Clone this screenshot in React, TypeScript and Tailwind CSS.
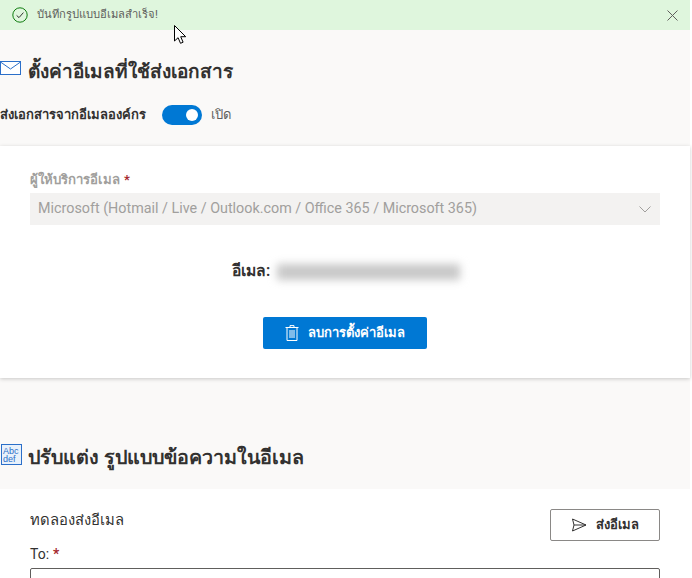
import React from "react";

const font = { fontFamily: '"Roboto","Noto Sans","DejaVu Sans",sans-serif' };

function Req() {
  return <span className="text-[#a4262c] ml-1 font-semibold">*</span>;
}

export default function App() {
  return (
    <div className="w-[692px] h-[578px] bg-white overflow-hidden relative text-[#323130]" style={font}>
      <div className="w-[690px] h-[578px] bg-[#faf9f8] flex flex-col">
        <div className="h-[30px] shrink-0 bg-[#dff6dd] flex items-center pl-3 pr-[12px] gap-[9px]">
          <svg width="16" height="16" viewBox="0 0 16 16" fill="none" className="shrink-0">
            <circle cx="8" cy="8" r="7.2" stroke="#107c10" strokeWidth="1" />
            <path d="M4.6 8.4 7 10.6 11.4 5.6" stroke="#323130" strokeWidth="1" />
          </svg>
          <span className="text-[11.2px] leading-none text-[#605e5c] flex-1">บันทึกรูปแบบอีเมลสำเร็จ!</span>
          <svg width="11" height="11" viewBox="0 0 11 11" fill="none" className="shrink-0">
            <path d="M.5.5 10.5 10.5M10.5.5.5 10.5" stroke="#605e5c" strokeWidth="1" />
          </svg>
        </div>

        <div className="h-[116px] shrink-0 flex flex-col">
          <div className="flex items-center mt-[25px] h-[34px]">
            <svg width="21" height="14" viewBox="0 0 21 14" fill="none" className="shrink-0 -mt-[8px]">
              <rect x=".5" y=".5" width="20" height="13" stroke="#2b6fc9" fill="#fff" />
              <path d="M.5 1 10.5 8 20.5 1" stroke="#2b6fc9" />
            </svg>
            <h1 className="ml-[7px] text-[19px] leading-[34px] font-bold text-[#323130] whitespace-nowrap">ตั้งค่าอีเมลที่ใช้ส่งเอกสาร</h1>
          </div>
          <div className="flex items-center mt-[16px] h-[20px]">
            <span className="text-[13px] font-semibold whitespace-nowrap">ส่งเอกสารจากอีเมลองค์กร</span>
            <span className="ml-[16px] w-10 h-5 rounded-full bg-[#0078d4] flex items-center justify-end pr-[4px]">
              <span className="w-3 h-3 rounded-full bg-white" />
            </span>
            <span className="ml-[9px] text-[13px] text-[#605e5c]">เปิด</span>
          </div>
        </div>

        <section className="h-[232px] shrink-0 bg-white shadow-[0_1px_4px_rgba(0,0,0,0.2)] px-[30px] pt-[23px] flex flex-col">
          <label className="h-[24px] text-[13.2px] leading-[22px] font-semibold text-[#a19f9d] whitespace-nowrap">
            ผู้ให้บริการอีเมล<Req />
          </label>
          <div className="h-8 bg-[#f3f2f1] flex items-center pl-2 pr-[9px] justify-between">
            <span className="text-[14.33px] text-[#a19f9d] whitespace-nowrap">Microsoft (Hotmail / Live / Outlook.com / Office 365 / Microsoft 365)</span>
            <svg width="12" height="7" viewBox="0 0 12 7" fill="none">
              <path d="M.5.5 6 6 11.5.5" stroke="#a19f9d" />
            </svg>
          </div>
          <div className="flex items-center mt-[34px] h-[26px] pl-[202px]">
            <span className="text-[15.6px] font-semibold whitespace-nowrap">อีเมล:</span>
            <span className="ml-[7px] w-[183px] h-[16px] bg-[#c8c8c8] blur-[4px]" />
          </div>
          <div className="flex justify-center mt-[32px]">
            <button className="w-[164px] h-8 bg-[#0078d4] rounded-[2px] text-white flex items-center justify-center gap-[9px]">
              <svg width="14" height="16" viewBox="0 0 14 16" fill="none">
                <path d="M.5 2.5h13M5 2.5V.6h4v1.9M2 2.5v13h10v-13M5 5v8M7 5v8M9 5v8" stroke="#fff" />
              </svg>
              <span className="text-[13px] font-semibold">ลบการตั้งค่าอีเมล</span>
            </button>
          </div>
        </section>

        <div className="h-[111px] shrink-0 flex items-end pb-[14px]">
          <div className="flex items-center h-[34px]">
            <svg width="21" height="21" viewBox="0 0 21 21" fill="none" className="shrink-0 -mt-[8px] ml-[1px]">
              <rect x=".5" y=".5" width="20" height="20" fill="#e8f1fb" stroke="#2b6fc9" />
              <text x="2" y="9.5" fontSize="9" fill="#2b6fc9" fontFamily="Liberation Sans">Abc</text>
              <text x="2" y="18" fontSize="9" fill="#2b6fc9" fontFamily="Liberation Sans">def</text>
            </svg>
            <h2 className="ml-[6px] text-[19.7px] leading-[34px] font-bold whitespace-nowrap">ปรับแต่ง รูปแบบข้อความในอีเมล</h2>
          </div>
        </div>

        <section className="flex-1 bg-white px-[30px] pt-5">
          <div className="flex justify-between items-start">
            <span className="text-[14.8px] leading-5 font-medium mt-[1px]">ทดลองส่งอีเมล</span>
            <button className="w-[110px] h-8 border border-[#8a8886] rounded-[2px] bg-white flex items-center justify-center gap-[9px]">
              <svg width="16" height="14" viewBox="0 0 16 14" fill="none">
                <path d="M1.5 1 15 7 1.5 13 3 7ZM3 7h12" stroke="#323130" />
              </svg>
              <span className="text-[13px] font-semibold">ส่งอีเมล</span>
            </button>
          </div>
          <div className="text-[14px] leading-5 mt-[3px] font-normal">To:<Req /></div>
          <div className="h-8 border border-[#605e5c] rounded-[2px] bg-white mt-[4px]" />
        </section>
      </div>

      <svg width="14" height="20" viewBox="0 0 14 20" className="absolute left-[174px] top-[25px]" fill="#fff" stroke="#000">
        <path d="M.5.5V16l3.6-3.3 2.4 5.6 2.6-1.1-2.4-5.5h5Z" />
      </svg>
    </div>
  );
}
